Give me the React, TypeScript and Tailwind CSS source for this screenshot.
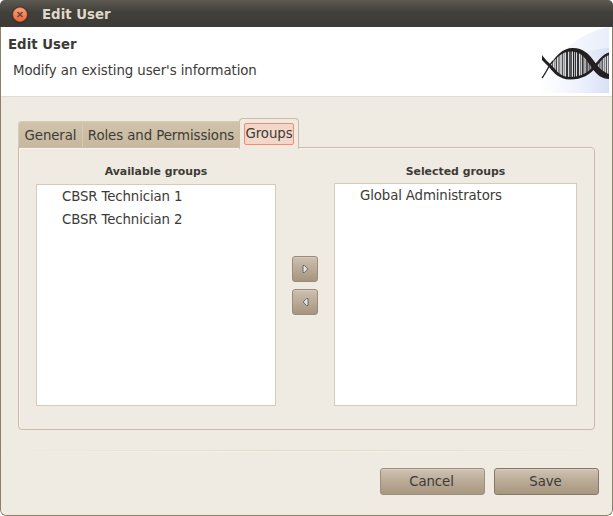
import React from "react";

function TitleBar() {
  return (
    <div className="flex h-[27px] shrink-0 items-center bg-linear-to-b from-[#5c5a51] via-[#42403a] via-45% to-[#3b3a36] pl-[11px]">
      <svg width="18" height="18" viewBox="0 0 18 18" className="mt-[2px] shrink-0">
        <defs>
          <linearGradient id="close" x1="0" y1="0" x2="0" y2="1">
            <stop offset="0" stopColor="#f9a17d" />
            <stop offset="1" stopColor="#ef6837" />
          </linearGradient>
        </defs>
        <circle cx="9" cy="9" r="8.5" fill="#33302c" />
        <circle cx="9" cy="8.6" r="7.1" fill="url(#close)" stroke="#b4512c" strokeWidth=".7" />
        <path d="M6.5 6l5 5M11.5 6l-5 5" stroke="#65453a" strokeWidth="1.5" />
      </svg>
      <h1 className="mt-[2px] ml-[13px] whitespace-nowrap text-[13.33px] leading-[16px] font-bold tracking-normal text-[#dfd8c8]">Edit User</h1>
    </div>
  );
}

const bars: [number, number, string][] = [
  [20, 1, "#555"], [22, 1.5, "#999"], [24, 1, "#444"], [26, 2, "#888"], [28.5, 1, "#aaa"],
  [30, 1.2, "#555"], [32, 1, "#999"], [34, 2, "#333"], [37, 3, "#555"], [41, 1.2, "#222"],
  [43, 1, "#333"], [45, 2, "#333"], [48, 1.2, "#777"], [50, 1.6, "#333"], [52.5, 1, "#777"],
  [54, 2, "#555"], [56.5, 1.5, "#666"], [58.5, 2, "#555"], [61, 1.2, "#777"],
  [65, 1.2, "#666"], [67, 1.6, "#777"], [69.5, 1.3, "#444"], [71.8, 1.4, "#888"], [74, 1, "#555"], [76, 1, "#777"],
];

function DnaArt() {
  return (
    <svg width="80" height="69" viewBox="0 0 80 69" className="shrink-0">
      <defs>
        <linearGradient id="glow" x1="0" y1="0" x2="1" y2="0">
          <stop offset="0" stopColor="#fff" stopOpacity="0" />
          <stop offset="1" stopColor="#d8e0f6" />
        </linearGradient>
        <linearGradient id="sky" x1="0" y1="0" x2="1" y2="0">
          <stop offset="0" stopColor="#fff" />
          <stop offset="1" stopColor="#e9eefb" />
        </linearGradient>
        <clipPath id="rungs">
          <path d="M18 38C24 30 29 23 41 23C53 23 57 31 63 37C57 46 51 51 38 51C28 51 22 44 18 38ZM63 37C69 33 72 28 77 27V50C71 48 67 43 63 37Z" />
        </clipPath>
      </defs>
      <path d="M6 66C18 32 42 7 77 0V66Z" fill="url(#sky)" />
      <path d="M10 66C26 36 49 22 77 21V66Z" fill="url(#glow)" />
      <g clipPath="url(#rungs)">
        <rect x="10" y="20" width="67" height="32" fill="#d9dce3" />
        {bars.map(([x, w, c]) => (
          <rect key={x} x={x} y="20" width={w} height="33" fill={c} />
        ))}
      </g>
      <path d="M10 51C14 46 17 38 21 34" stroke="#292426" strokeWidth="1.4" fill="none" />
      <path d="M10 28C14 34 18 36 22 41C27 47 31 50 38 50C50 50 57 45 63 37C68 32 71 27 77 25.5V28C71 30 68 35 65 39C58 48 50 52.5 38 52.5C27 52.5 21 45 17 40C14 37 12 35 10 33Z" fill="#231f20" />
      <path d="M18 38C24 29 30 21 41 21C51 21 57 27 62 34C67 41 71 45 77 47V52C70 52 65 48 60 41C54 32 50 25.5 41 24.5C31 23.5 25 30 18 38Z" fill="#231f20" />
    </svg>
  );
}

function ListBox({ title, items, first }: { title: string; items: string[]; first?: boolean }) {
  return (
    <section className={first ? "w-[240px]" : "w-[243px]"}>
      <h3 className={`flex items-center justify-center whitespace-nowrap text-[10.9px] font-bold tracking-normal ${first ? "h-[36px] pt-[11px]" : "h-[35px] pt-[12px]"}`}>{title}</h3>
      <ul className={`border border-[#d7cbb8] bg-white pl-[25px] tracking-[-0.13px] ${first ? "h-[222px]" : "h-[223px]"}`}>
        {items.map((item) => (
          <li key={item} className="flex h-[23px] items-center whitespace-nowrap">{item}</li>
        ))}
      </ul>
    </section>
  );
}

function ArrowButton({ left }: { left?: boolean }) {
  return (
    <button aria-label={left ? "Remove group" : "Add group"} className="flex h-[26px] w-[26px] items-center justify-center rounded-[3px] border border-[#9b8c79] bg-linear-to-b from-[#cec0b0] to-[#a6947e] pl-px shadow-[inset_0_1px_0_#d5c9bb]">
      <svg width="7" height="8" viewBox="0 0 7 8" className={left ? "rotate-180" : ""}>
        <path d="M1 .5H2.4L5.8 4L2.4 7.5H1Z" fill="#e0e9ee" stroke="#646660" />
      </svg>
    </button>
  );
}

function ActionButton({ label, dark }: { label: string; dark?: boolean }) {
  return (
    <button className={`flex h-[27px] w-[105px] items-center justify-center rounded-[3px] border bg-linear-to-b from-[#d0c3b5] via-[#b9aa96] via-50% to-[#a89780] shadow-[inset_0_1px_0_#d8cdc0] ${dark ? "border-[#877865]" : "border-[#9e8f7d]"}`}>
      <span className="mr-[2px]">{label}</span>
    </button>
  );
}

export default function App() {
  return (
    <div className="h-[516px] w-[613px] bg-white">
      <main className="flex h-full flex-col overflow-hidden rounded-t-[5px] rounded-b-[6px] bg-[#efebe3] font-['DejaVu_Sans',sans-serif] text-[13.33px] leading-[16px] tracking-[-0.08px] text-[#3c3b37]">
        <TitleBar />
        <div className="flex min-h-0 flex-1 flex-col rounded-b-[6px] border-x border-b border-[#8d7e67]">
          <header className="flex h-[70px] shrink-0 justify-between border-b border-[#e4dccd] bg-white">
            <div className="pl-[7px]">
              <h2 className="mt-[10px] font-bold tracking-normal">Edit User</h2>
              <p className="mt-[10px] ml-[5px]">Modify an existing user's information</p>
            </div>
            <DnaArt />
          </header>
          <div className="mt-[21px] ml-[17px] flex h-[30px] items-end">
            <div className="flex h-[27px] w-[64px] items-center justify-center rounded-tl-[4px] border-t border-l border-[#d6cbb7] bg-linear-to-b from-[#d0c3ac] to-[#c7b89d] pt-px">General</div>
            <div className="flex h-[27px] w-[157px] items-center justify-center whitespace-nowrap border-t border-l border-[#d6cbb7] bg-linear-to-b from-[#d0c3ac] to-[#c7b89d] pt-px">Roles and Permissions</div>
            <div className="z-10 -mb-px flex h-[31px] w-[60px] items-start justify-center rounded-t-[4px] border border-b-0 border-[#cbbda5] bg-[#efebe3] pt-[4px]">
              <span className="flex h-[22px] w-[50px] items-center justify-center rounded-[2px] border border-[#fa8970] bg-[#f3d8ca]">Groups</span>
            </div>
          </div>
          <section className="-mt-px ml-[17px] flex h-[283px] w-[577px] rounded-b-[4px] rounded-tr-[4px] border border-[#cbbda5] pl-[17px] shadow-[inset_1px_1px_0_#f7f3e9]">
            <ListBox first title="Available groups" items={["CBSR Technician 1", "CBSR Technician 2"]} />
            <div className="mx-[16px] mt-[108px] flex w-[26px] flex-col gap-[7px]">
              <ArrowButton />
              <ArrowButton left />
            </div>
            <ListBox title="Selected groups" items={["Global Administrators"]} />
          </section>
          <div className="mt-[20px] h-px shrink-0 bg-linear-to-r from-[#efebe3] via-[#e1d8c7] to-[#efebe3]" />
          <div className="h-px shrink-0 bg-linear-to-r from-[#efebe3] via-[#f7f2e8] to-[#efebe3]" />
          <footer className="mt-[16px] flex justify-end gap-[9px] pr-[13px]">
            <ActionButton label="Cancel" />
            <ActionButton label="Save" dark />
          </footer>
        </div>
      </main>
    </div>
  );
}
